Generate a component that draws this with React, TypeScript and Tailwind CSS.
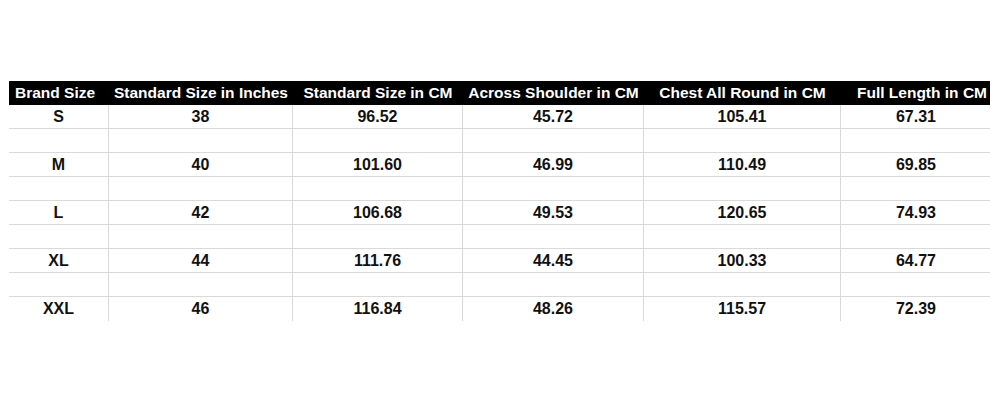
import React from "react";

const headers = [
  "Brand Size",
  "Standard Size in Inches",
  "Standard Size in CM",
  "Across Shoulder in CM",
  "Chest All Round in CM",
  "Full Length in CM",
];

const rows: string[][] = [
  ["S", "38", "96.52", "45.72", "105.41", "67.31"],
  ["M", "40", "101.60", "46.99", "110.49", "69.85"],
  ["L", "42", "106.68", "49.53", "120.65", "74.93"],
  ["XL", "44", "111.76", "44.45", "100.33", "64.77"],
  ["XXL", "46", "116.84", "48.26", "115.57", "72.39"],
];

const grid = "grid grid-cols-[100px_184px_170px_181px_197px_150px]";

export default function App() {
  return (
    <div
      className="w-[1000px] h-[400px] bg-white pt-[81px] pl-[9px]"
      style={{ fontFamily: '"Liberation Sans", Arial, sans-serif' }}
    >
      <div className="w-[981px]">
        <div className={`${grid} h-[24px] bg-black text-white text-[15.5px] font-bold`}>
          {headers.map((h, i) => (
            <div
              key={h}
              className={`flex items-center whitespace-nowrap ${i === 0 ? "justify-start pl-[6px]" : i === 5 ? "justify-end pr-[4px]" : "justify-center"}`}
            >
              {h}
            </div>
          ))}
        </div>
        {rows.map((r, ri) => {
          const last = ri === rows.length - 1;
          return (
            <React.Fragment key={r[0]}>
              <div
                className={`${grid} h-[24px] text-[16px] font-bold text-[#111] ${last ? "" : "border-b border-[#d9d9d9]"}`}
              >
                {r.map((c, ci) => (
                  <div
                    key={ci}
                    className={`flex items-center justify-center ${ci < 5 ? "border-r border-[#d9d9d9]" : ""}`}
                  >
                    {c}
                  </div>
                ))}
              </div>
              {!last && (
                <div className={`${grid} h-[24px] border-b border-[#d9d9d9]`}>
                  {r.map((_, ci) => (
                    <div key={ci} className={ci < 5 ? "border-r border-[#d9d9d9]" : ""} />
                  ))}
                </div>
              )}
            </React.Fragment>
          );
        })}
      </div>
    </div>
  );
}
